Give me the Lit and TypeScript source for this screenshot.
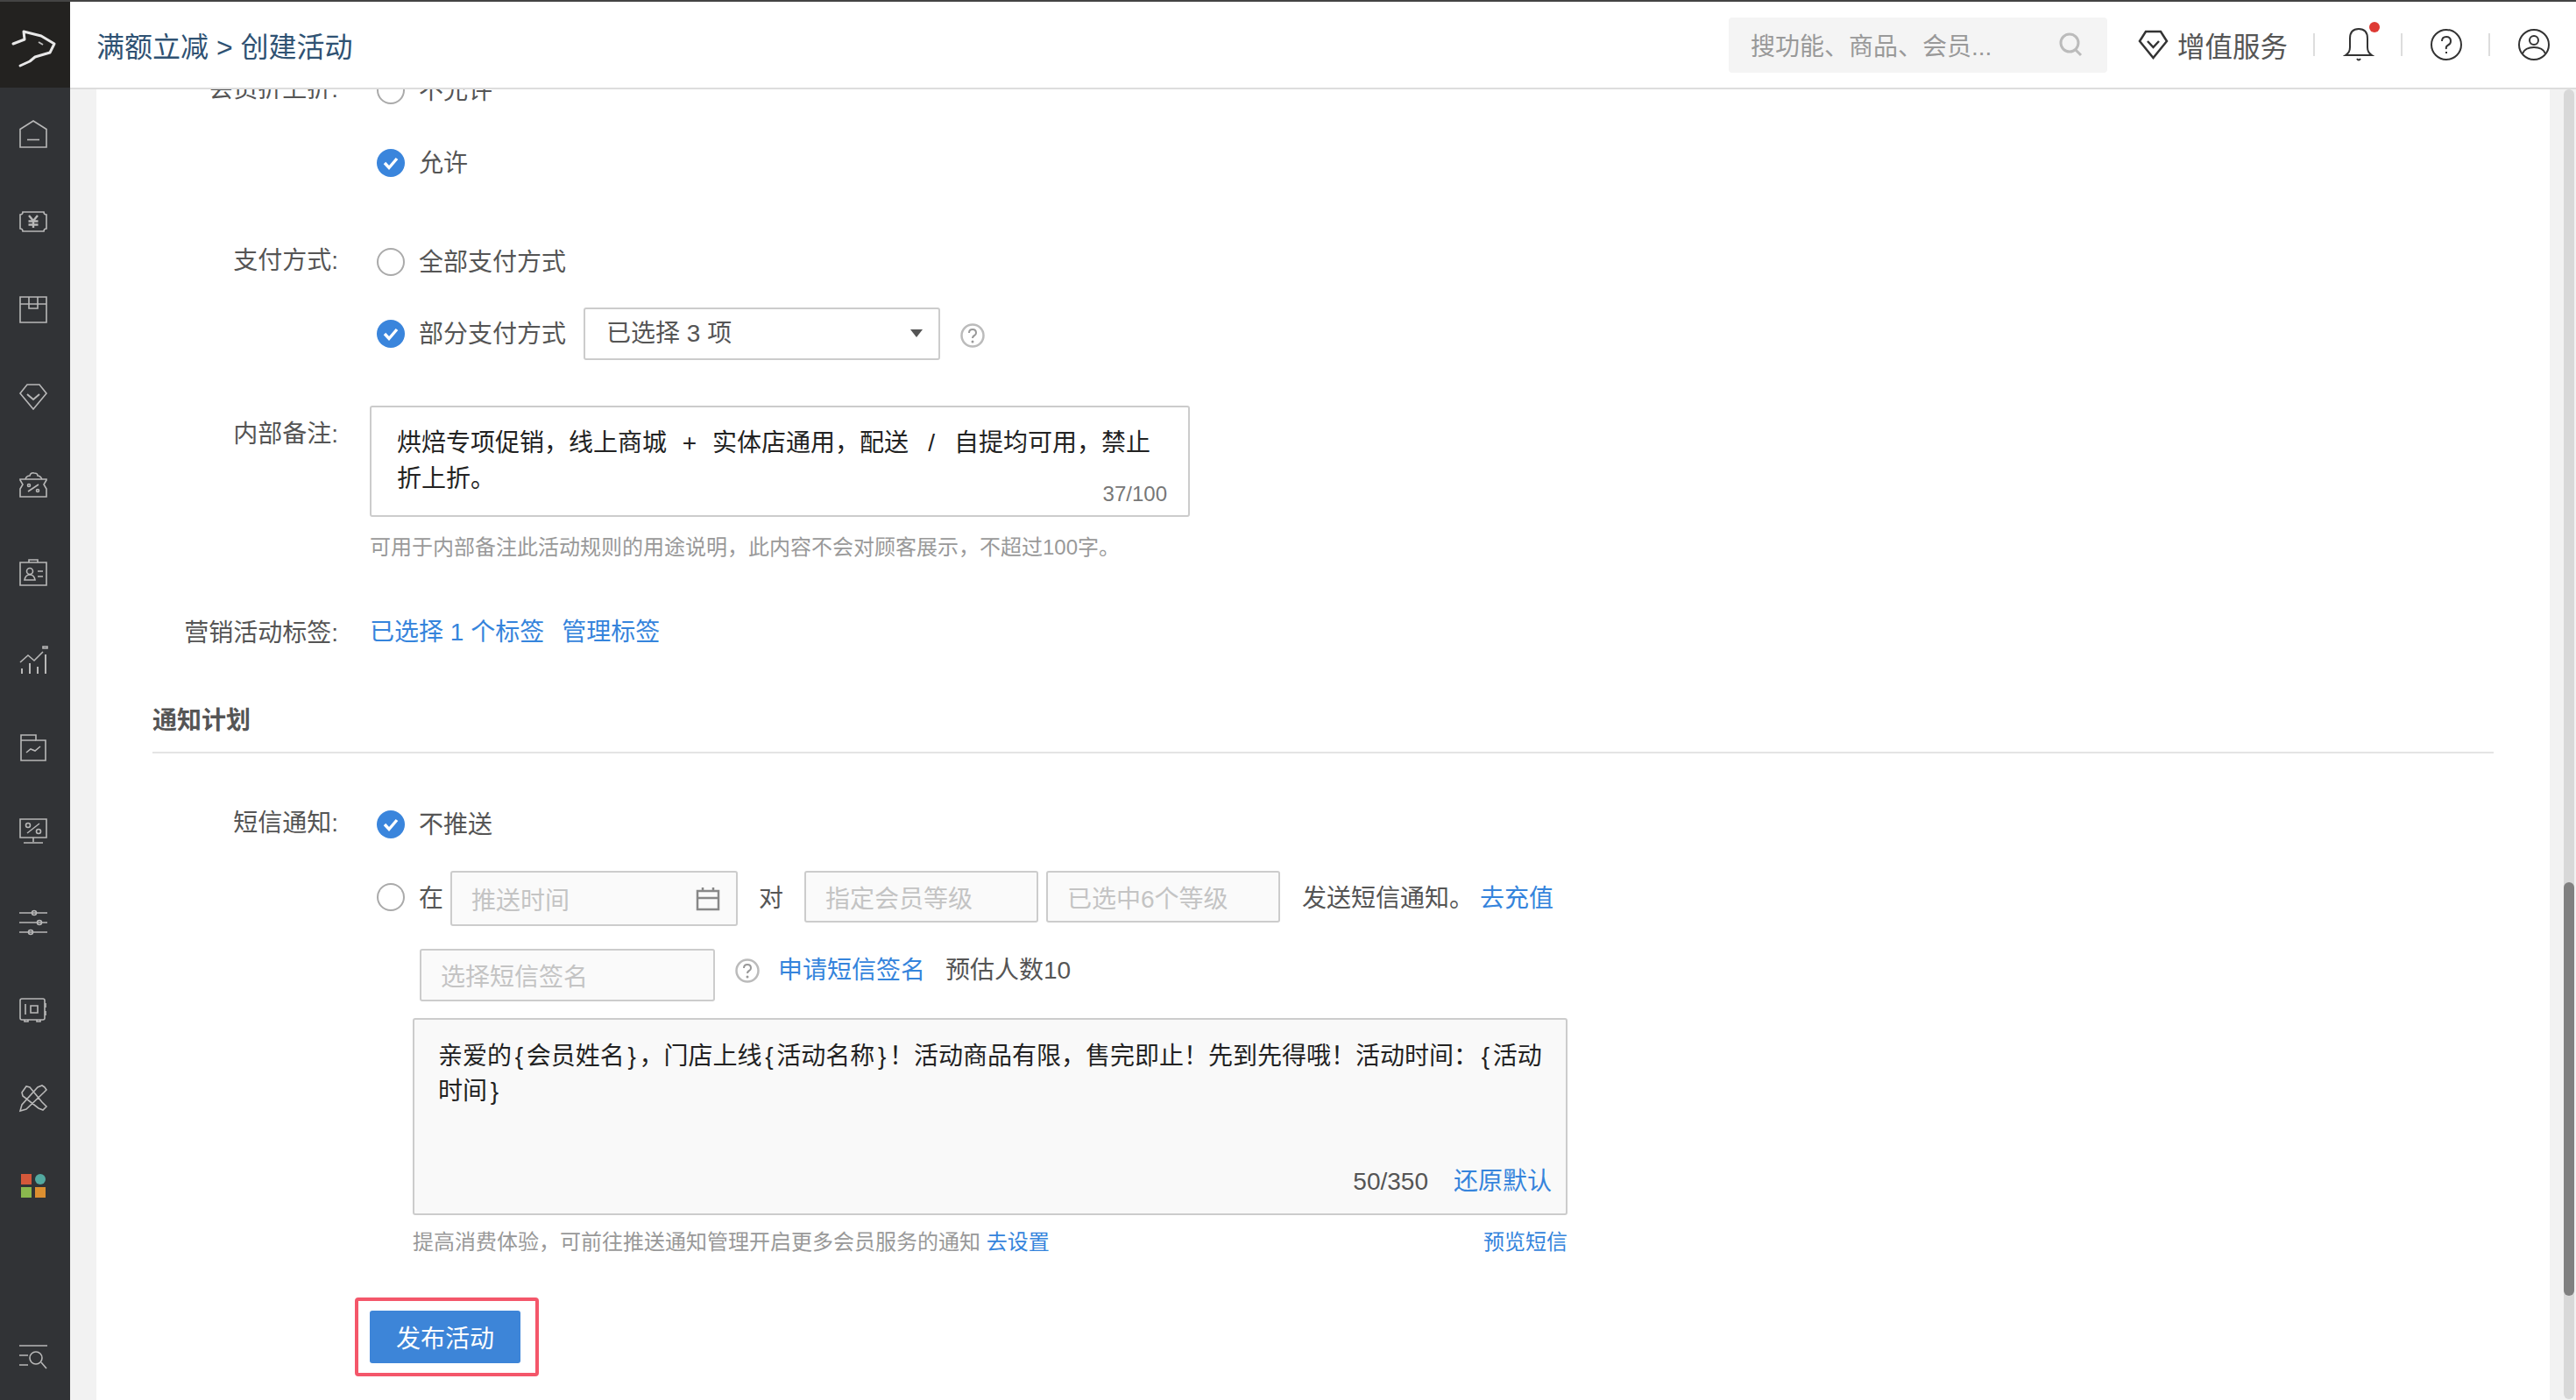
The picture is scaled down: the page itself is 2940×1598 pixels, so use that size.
import { LitElement, css, html, svg } from "lit";
import { customElement } from "lit/decorators.js";

// sidebar icons, all on a 32x32 box
const navIcons = [
  svg`<path d="M1 10.5 16 1l15 9.500V31H1Z"/><path d="M9 22.500h14"/>`,
  svg`<path d="M4 5h24q0 3 3 3v16q-3 0-3 3H4q0-3-3-3V8q3 0 3-3Z"/><path d="m11 9 5 6 5-6M10.500 15.500h11M10.500 19.500h11M16 15v8" stroke-width="2.400"/>`,
  svg`<path d="M1 10V2h30v8M1 10v21h30V10ZM11 2v13h10V2"/>`,
  svg`<path d="M9 2h14l8 10-15 18L1 12Z"/><path d="m9 13 7 6 7-6" stroke-width="2"/>`,
  svg`<path d="M1 10h30v1l-3 5 3 5v9H1v-9l3-5-3-5Z"/><path d="M7 10q1-4 5-4 1-4 5-3 4 0 4 3 3 0 5 4M10 24 22 16"/><circle cx="11" cy="17" r="1.500"/><circle cx="21" cy="23" r="1.500"/>`,
  svg`<path d="M1 5h30v26H1ZM11 5V2h10v3"/><circle cx="12" cy="15" r="3.500"/><path d="M6 25q1-6 6-6t6 6ZM21 15h6M21 21h6"/>`,
  svg`<path d="m1 19 9-8 7 6 10-10"/><path d="M3 32v-6M12 32V20M21 32v-8M30 32V10" stroke-width="2"/><path d="M27 1h5v2h-5Z"/>`,
  svg`<path d="M2 2h17v6h11v23H2Z"/><path d="M2 8h17M8 22l5-4 5 2 6-5"/>`,
  svg`<path d="M1-2h30v21H1ZM16 19v5M5 25h22"/><path d="M9 14 23 3" stroke-width="1.500"/><circle cx="10" cy="5" r="2.500"/><circle cx="22" cy="12" r="2.500"/>`,
  svg`<path d="M0 5h32M0 16h32M0 27h32"/><circle cx="17" cy="5" r="2.500"/><circle cx="23" cy="16" r="2.500"/><circle cx="13" cy="27" r="2.500"/>`,
  svg`<rect x="1" y="3" width="28" height="24" rx="2"/><path d="M7 9v12M13 11h8v8h-8ZM30 8v5M30 17v5M6 27v2h4v-2M20 27v2h4v-2"/>`,
  svg`<path d="m3 10 5-7 4 1 14 17 5 5-4 4-5-2L4 14ZM29 4l-3-2-5 2L3 24l-2 7 7-2L28 10l3-3Z"/>`,
];

const logo = svg`<path d="M15 48 28 43l-1-9 20 5 15 9-5 10-17 5-6 5-11 5" fill="none" stroke="#e8e8e8" stroke-width="3" stroke-linejoin="round" stroke-linecap="round"/><path d="m44 46 5 3" stroke="#bbb" stroke-width="2"/>`;

const help = html`<svg class="help" viewBox="0 0 28 28">
  <circle cx="14" cy="14" r="12.500" fill="none" stroke="#bbb" stroke-width="2.500" />
  <path d="M10 11q0-4 4-4t4 4q0 2-2 3t-2 3" fill="none" stroke="#999" stroke-width="2" />
  <circle cx="14" cy="21" r="1.500" fill="#999" />
</svg>`;

@customElement("app-root")
export class AppRoot extends LitElement {
  static styles = css`
    :host {
      display: grid;
      grid-template-columns: 80px 1fr;
      width: 2940px;
      height: 1598px;
      overflow: hidden;
      background: #fff;
      font-family: "Liberation Sans", "Noto Sans CJK SC", sans-serif;
      font-size: 28px;
      color: #555;
    }

    a {
      color: #3584dc;
    }

    .side {
      display: flex;
      flex-direction: column;
      background: #313336;
      border-top: 2px solid #444;
      height: 1596px;
    }
    .logo {
      display: block;
      flex: none;
      width: 80px;
      height: 98px;
      background: #232220;
      margin-bottom: 3px;
    }
    .nav {
      display: flex;
      align-items: center;
      justify-content: center;
      height: 100px;
      flex: none;
      padding-right: 4px;
    }
    .nav svg {
      width: 32px;
      height: 32px;
      overflow: visible;
      fill: none;
      stroke: #b8b8b8;
      stroke-width: 1.600;
    }
    .apps {
      display: grid;
      grid-template-columns: 12px 12px;
      gap: 3px 4px;
    }
    .apps i {
      height: 12px;
      display: block;
    }
    .bottom {
      margin-top: auto;
      margin-bottom: -2px;
    }

    .main {
      display: flex;
      flex-direction: column;
      min-width: 0;
      height: 1598px;
    }
    .top {
      display: flex;
      align-items: center;
      flex: none;
      height: 98px;
      border-top: 2px solid #444;
      border-bottom: 2px solid #ddd;
      padding-left: 30px;
      position: relative;
      z-index: 1;
      background: #fff;
    }
    .crumb {
      font-size: 32px;
      color: #2f5273;
      flex: 1;
    }
    .search {
      display: flex;
      align-items: center;
      justify-content: space-between;
      box-sizing: border-box;
      width: 432px;
      height: 63px;
      padding: 0 26px 0 25px;
      background: #f4f4f4;
      border-radius: 4px;
      color: #999;
      margin-right: 35px;
    }
    .search svg {
      width: 32px;
      height: 32px;
    }
    .vip {
      display: flex;
      align-items: center;
      gap: 10px;
      font-size: 31.500px;
      color: #555;
      width: 200px;
    }
    .vip svg {
      width: 35px;
      height: 34px;
    }
    .tool {
      position: relative;
      display: flex;
      align-items: center;
      justify-content: center;
      box-sizing: border-box;
      width: 100px;
      height: 26px;
      padding-left: 4px;
    }
    .tool + .tool::before,
    .vip + .tool::before {
      content: "";
      position: absolute;
      left: 0;
      top: 0;
      width: 2px;
      height: 26px;
      background: #ddd;
    }
    .tool svg {
      width: 36px;
      height: 38px;
      flex: none;
    }
    .dot {
      position: absolute;
      width: 12px;
      height: 12px;
      border-radius: 50%;
      background: #de3a34;
      left: 64px;
      top: -13px;
    }

    .body {
      flex: 1;
      display: flex;
      min-height: 0;
      background: #f2f2f2;
      padding-left: 30px;
    }
    .panel {
      flex: 1;
      background: #fff;
      padding: 0 64px;
      overflow: hidden;
    }
    .scroll {
      flex: none;
      width: 30px;
      box-sizing: border-box;
      padding-left: 16px;
    }
    .track {
      width: 12px;
      height: 1495px;
      background: #d8d8d8;
      border-radius: 6px;
      padding-top: 905px;
      box-sizing: border-box;
    }
    .thumb {
      height: 472px;
      background: #808080;
      border-radius: 6px;
    }

    .form {
      margin-top: -21px;
    }
    .row {
      display: grid;
      grid-template-columns: 212px 1fr;
      column-gap: 36px;
    }
    .label {
      text-align: right;
      line-height: 38px;
      padding-top: 2px;
      white-space: nowrap;
    }
    .opts {
      display: flex;
      flex-direction: column;
      min-width: 0;
    }
    .opt {
      display: flex;
      align-items: center;
      height: 44px;
      line-height: 37px;
      padding-left: 8px;
      gap: 16px;
      white-space: nowrap;
    }
    .radio {
      box-sizing: border-box;
      flex: none;
      width: 32px;
      height: 32px;
      border-radius: 50%;
      border: 2px solid #aaa;
      background: #fff;
    }
    .radio.on {
      border: none;
      background: #3a85dc;
    }
    .radio svg {
      display: block;
      width: 32px;
      height: 32px;
    }
    .select {
      box-sizing: border-box;
      display: flex;
      align-items: center;
      justify-content: space-between;
      width: 407px;
      height: 60px;
      padding: 0 18px 2px 24px;
      border: 2px solid #ccc;
      border-radius: 3px;
      margin-left: 4px;
    }
    .caret {
      width: 0;
      height: 0;
      border: 7px solid transparent;
      border-top: 9px solid #555;
      border-bottom: none;
    }
    .help {
      width: 28px;
      height: 28px;
      flex: none;
    }
    .select + .help {
      margin: 3px 0 0 7px;
    }
    .note {
      box-sizing: border-box;
      display: flex;
      flex-direction: column;
      width: 936px;
      height: 127px;
      padding: 20px 24px 0 29px;
      border: 2px solid #ccc;
      border-radius: 3px;
      color: #222;
      line-height: 41px;
    }
    .sep {
      display: inline-block;
      width: 52px;
      text-align: center;
    }
    .count {
      font-size: 24px;
      color: #777;
      text-align: right;
      line-height: 24px;
      margin-top: -15px;
    }
    .hint {
      font-size: 24px;
      line-height: 34px;
      color: #999;
      white-space: nowrap;
    }
    .tags {
      display: flex;
      gap: 20px;
      line-height: 40px;
    }
    h2 {
      margin: 0;
      font-size: 28px;
      font-weight: 700;
      line-height: 38px;
      color: #555;
    }
    hr {
      border: none;
      height: 2px;
      background: #e4e4e4;
      margin: 16px 0 0;
    }

    .push {
      display: flex;
      align-items: flex-start;
      white-space: nowrap;
    }
    .push span,
    .push a {
      line-height: 64px;
    }
    .push .radio {
      margin: 14px 16px 0 8px;
    }
    .input {
      box-sizing: border-box;
      display: flex;
      align-items: center;
      justify-content: space-between;
      height: 59px;
      padding: 0 22px;
      background: #fafafa;
      border: 2px solid #ccc;
      border-radius: 3px;
      color: #c4c4c4;
    }
    .input.date {
      width: 328px;
      height: 63px;
      margin-left: 8px;
      padding-right: 18px;
    }
    .input.level {
      width: 267px;
    }
    .cal {
      width: 28px;
      height: 28px;
    }
    .sign {
      display: flex;
      align-items: flex-start;
      margin: 25px 0 0 57px;
      white-space: nowrap;
    }
    .sign .input {
      width: 337px;
      height: 60px;
    }
    .sign .help {
      margin: 11px 21px 0 23px;
    }
    .sign span,
    .sign a {
      line-height: 50px;
    }
    .sms {
      box-sizing: border-box;
      display: flex;
      flex-direction: column;
      justify-content: space-between;
      width: 1318px;
      height: 225px;
      margin: 19px 0 0 49px;
      padding: 22px 16px 16px 27px;
      background: #f9f9f9;
      border: 2px solid #ccc;
      border-radius: 3px;
      color: #222;
      line-height: 40px;
    }
    .brace {
      padding: 0 3.700px;
    }
    .sms-foot {
      display: flex;
      justify-content: flex-end;
      gap: 29px;
      color: #555;
    }
    .sms-hint {
      display: flex;
      justify-content: space-between;
      width: 1318px;
      margin: 14px 0 0 49px;
    }
    .mark {
      box-sizing: border-box;
      width: 210px;
      height: 90px;
      margin: 46px 0 0 -17px;
      border: 4px solid #f4566a;
      border-radius: 4px;
      padding: 11px 13px;
    }
    .publish {
      display: flex;
      align-items: center;
      justify-content: center;
      width: 172px;
      height: 60px;
      background: #3d85d8;
      border-radius: 3px;
      color: #fff;
    }
  `;

  radio(on: boolean) {
    if (!on) return html`<div class="radio"></div>`;
    return html`<div class="radio on">
      <svg viewBox="0 0 32 32"><path d="m9 16 5 5.500L23 11" fill="none" stroke="#fff" stroke-width="3.400" /></svg>
    </div>`;
  }

  // the braces of the sms template run wider than Liberation's
  braces(text: string) {
    return text.split(/([{}])/).map((part) => (part === "{" || part === "}" ? html`<span class="brace">${part}</span>` : part));
  }

  render() {
    return html`
      <aside class="side">
        <svg class="logo" viewBox="0 0 80 98">${logo}</svg>
        ${navIcons.map((i) => html`<div class="nav"><svg viewBox="0 0 32 32">${i}</svg></div>`)}
        <div class="nav">
          <div class="apps">
            <i style="background:#d4583a"></i>
            <i style="background:#53a9a0;border-radius:50%"></i>
            <i style="background:#8ab84e"></i>
            <i style="background:#dc8f30"></i>
          </div>
        </div>
        <div class="nav bottom">
          <svg viewBox="0 0 32 32"><path d="M0 2h32M0 13h10M0 24h10M25 21l6 7" /><circle cx="19" cy="16" r="7" /></svg>
        </div>
      </aside>
      <div class="main">
        <header class="top">
          <div class="crumb">满额立减 > 创建活动</div>
          <div class="search">
            搜功能、商品、会员...
            <svg viewBox="0 0 32 32" fill="none" stroke="#bbb" stroke-width="3">
              <circle cx="15" cy="14" r="10" /><path d="m22 22 6 6" />
            </svg>
          </div>
          <div class="vip">
            <svg viewBox="0 0 35 34" fill="none" stroke="#333" stroke-width="2.500">
              <path d="M9 2h17l7 11-15.500 19L2 13Z" /><path d="m11 13 6.500 7 6.500-7" />
            </svg>
            增值服务
          </div>
          <div class="tool">
            <svg viewBox="0 0 36 38" fill="none" stroke="#333" stroke-width="2">
              <path d="M18 1q-10 0-10 11v10q0 6-5 9h30q-5-3-5-9V12q0-11-10-11ZM16 35q2 3 4 0" />
            </svg>
            <i class="dot"></i>
          </div>
          <div class="tool">
            <svg viewBox="0 0 36 38" fill="none" stroke="#333" stroke-width="2">
              <circle cx="18" cy="19" r="17" /><path d="M13 15q0-5 5-5t5 5q0 3-3 4.500T18 24M18 27v2" />
            </svg>
          </div>
          <div class="tool">
            <svg viewBox="0 0 36 38" fill="none" stroke="#333" stroke-width="2">
              <circle cx="18" cy="19" r="17" /><circle cx="18" cy="14" r="5" /><path d="M5 29q3-7 13-7t13 7" />
            </svg>
          </div>
        </header>
        <div class="body">
          <main class="panel">
            <div class="form">
              <div class="row">
                <div class="label">会员折上折:</div>
                <div class="opts">
                  <div class="opt">${this.radio(false)}不允许</div>
                  <div class="opt" style="margin-top:39px">${this.radio(true)}允许</div>
                </div>
              </div>

              <div class="row" style="margin-top:69px">
                <div class="label">支付方式:</div>
                <div class="opts">
                  <div class="opt">${this.radio(false)}全部支付方式</div>
                  <div class="opt" style="height:60px;margin-top:30px">
                    ${this.radio(true)}部分支付方式
                    <div class="select">已选择 3 项<i class="caret"></i></div>
                    ${help}
                  </div>
                </div>
              </div>

              <div class="row" style="margin-top:52px">
                <div class="label" style="margin-top:12px">内部备注:</div>
                <div class="opts">
                  <div class="note">
                    <div>烘焙专项促销，线上商城<span class="sep">+</span>实体店通用，配送<span class="sep">/</span>自提均可用，禁止<br />折上折。</div>
                    <div class="count">37/100</div>
                  </div>
                  <div class="hint" style="margin-top:18px">可用于内部备注此活动规则的用途说明，此内容不会对顾客展示，不超过100字。</div>
                </div>
              </div>

              <div class="row" style="margin-top:60px">
                <div class="label">营销活动标签:</div>
                <div class="tags"><a>已选择 1 个标签</a><a>管理标签</a></div>
              </div>

              <h2 style="margin-top:62px">通知计划</h2>
              <hr />

              <div class="row" style="margin-top:59px">
                <div class="label">短信通知:</div>
                <div class="opts">
                  <div class="opt">${this.radio(true)}不推送</div>
                  <div class="push" style="margin-top:31px">
                    ${this.radio(false)}<span>在</span>
                    <div class="input date">
                      推送时间
                      <svg class="cal" viewBox="0 0 28 28" fill="none" stroke="#888" stroke-width="2.500">
                        <path d="M2 5h24v21H2ZM2 13h24M8 1v5M20 1v5" />
                      </svg>
                    </div>
                    <span style="margin:0 24px">对</span>
                    <div class="input level">指定会员等级</div>
                    <div class="input level" style="margin-left:9px">已选中6个等级</div>
                    <span style="margin-left:25px">发送短信通知。</span>
                    <a style="margin-left:7px">去充值</a>
                  </div>
                  <div class="sign">
                    <div class="input">选择短信签名</div>
                    ${help}
                    <a>申请短信签名</a>
                    <span style="margin-left:23px">预估人数10</span>
                  </div>
                  <div class="sms">
                    <div>${this.braces("亲爱的{会员姓名}，门店上线{活动名称}！活动商品有限，售完即止！先到先得哦！活动时间：{活动")}<br />${this.braces("时间}")}</div>
                    <div class="sms-foot"><span>50/350</span><a>还原默认</a></div>
                  </div>
                  <div class="hint sms-hint">
                    <span>提高消费体验，可前往推送通知管理开启更多会员服务的通知 <a>去设置</a></span>
                    <a>预览短信</a>
                  </div>
                  <div class="mark"><div class="publish">发布活动</div></div>
                </div>
              </div>
            </div>
          </main>
          <div class="scroll">
            <div class="track"><div class="thumb"></div></div>
          </div>
        </div>
      </div>
    `;
  }
}
